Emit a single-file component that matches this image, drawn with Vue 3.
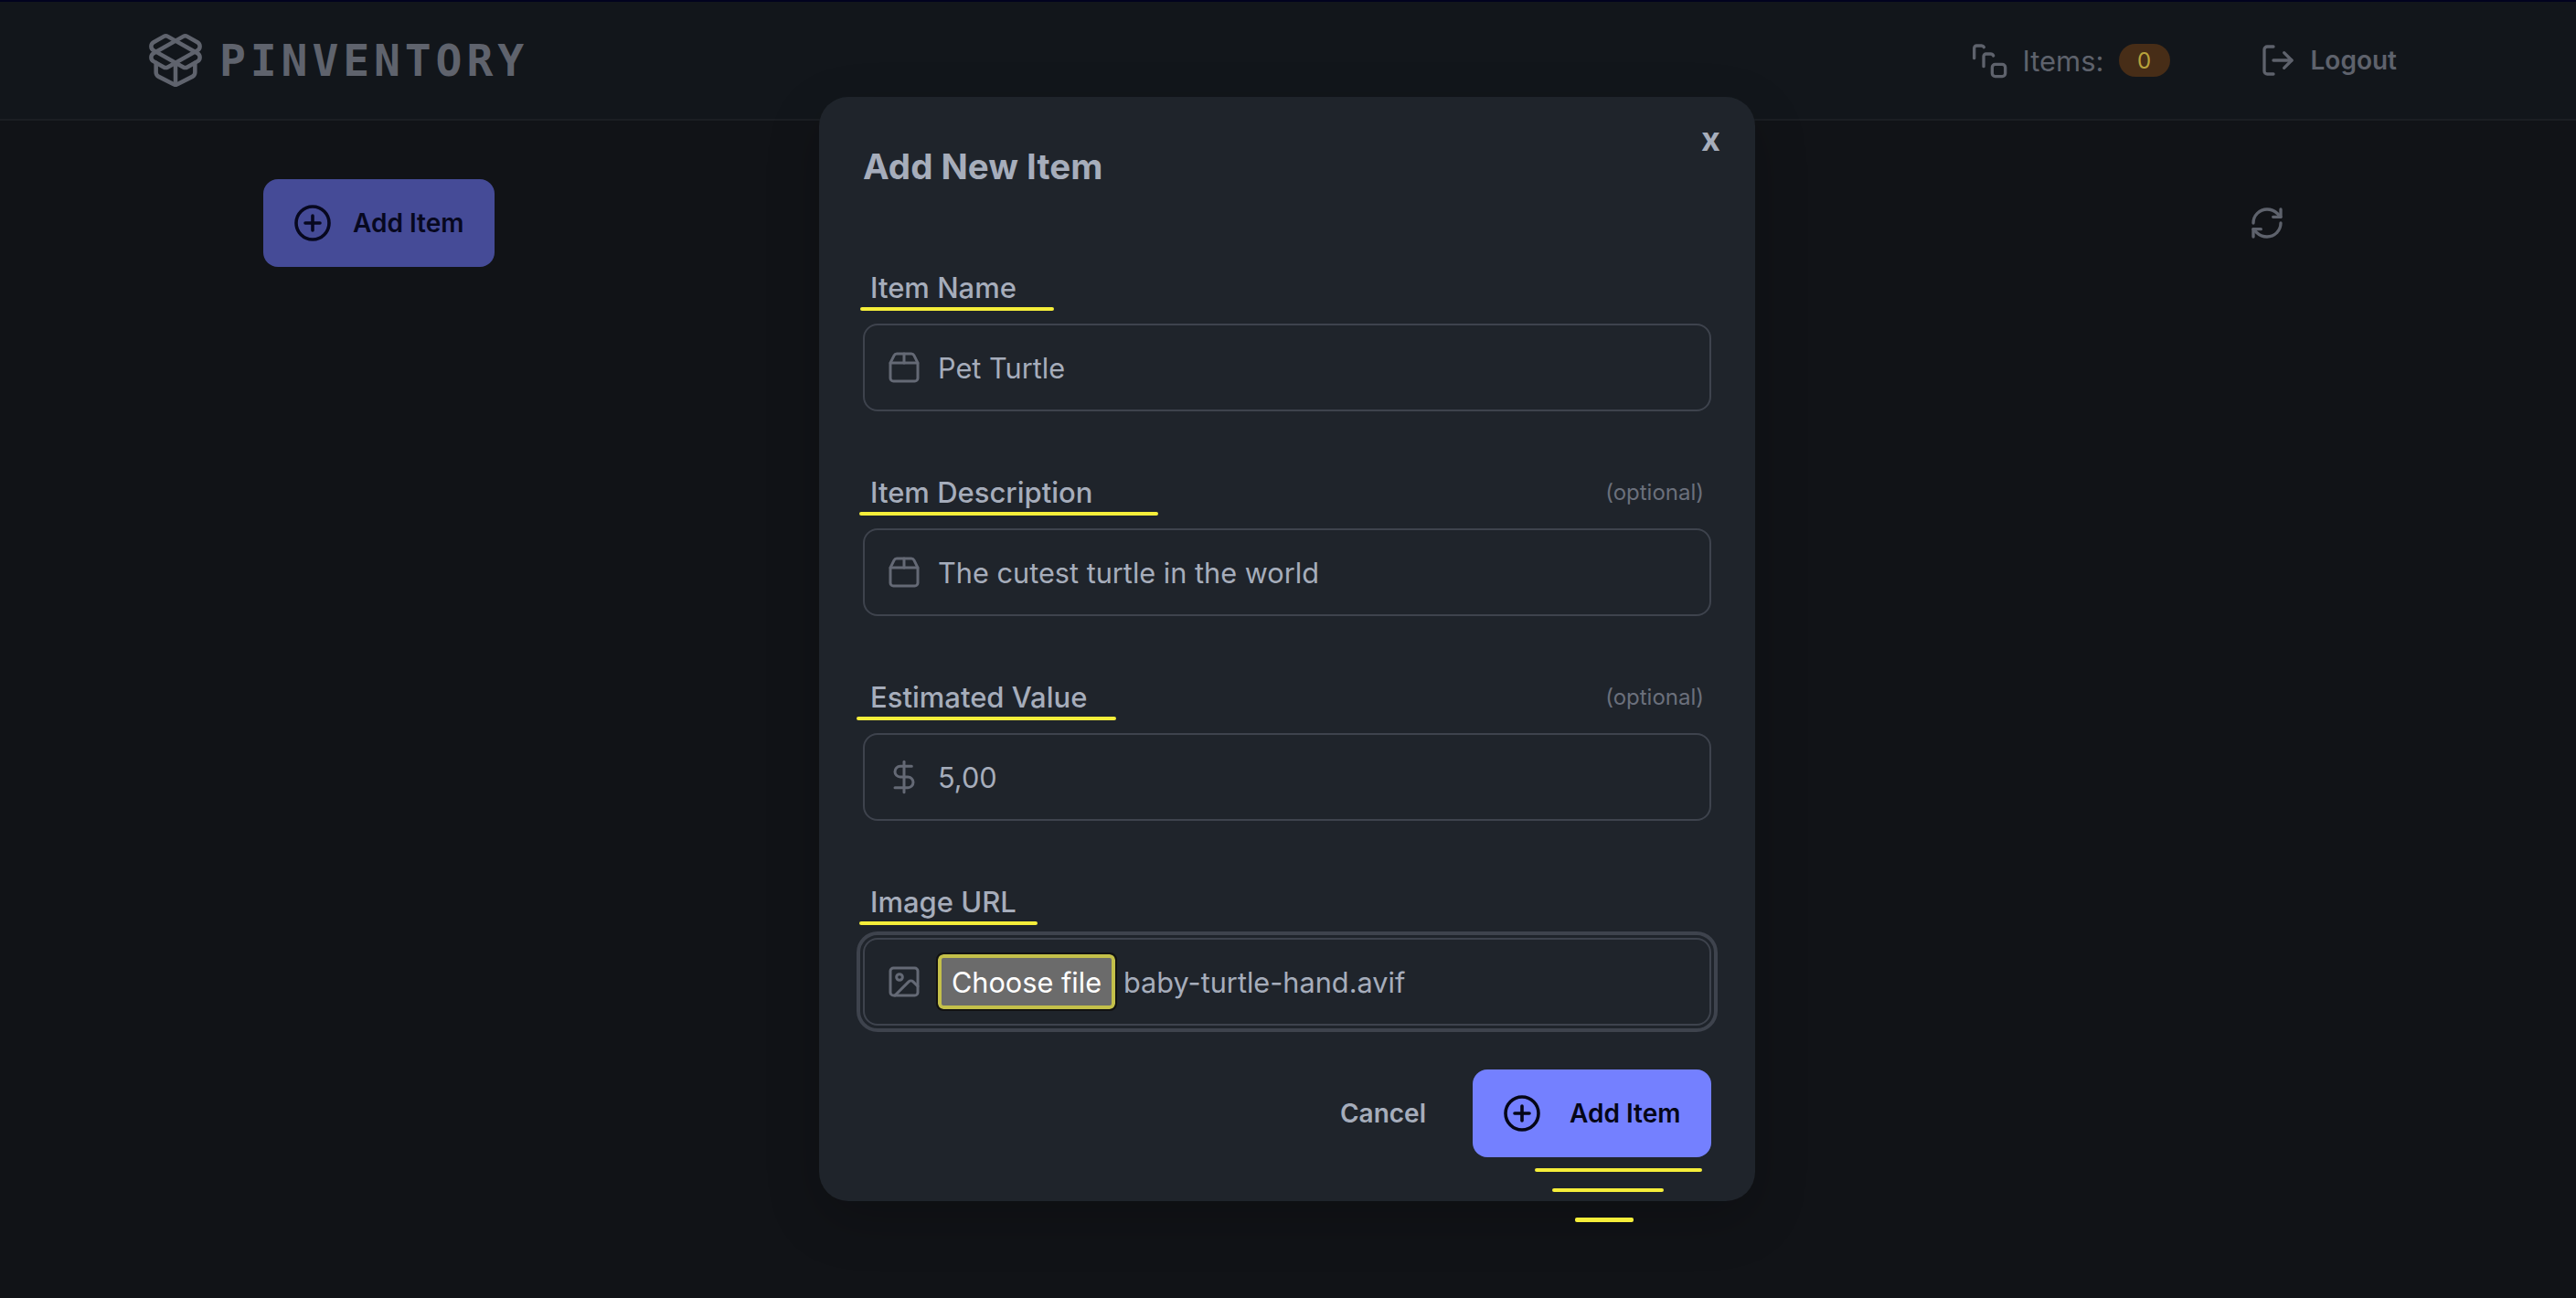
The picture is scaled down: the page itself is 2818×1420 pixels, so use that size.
<template>
  <div class="page">
    <header class="navbar">
      <div class="brand">
        <svg class="brand-icon" viewBox="0 0 24 24">
          <path d="M12 22v-9" />
          <path d="M15.17 2.21a1.67 1.67 0 0 1 1.63 0L21 4.57a1.93 1.93 0 0 1 0 3.36L8.82 14.79a1.655 1.655 0 0 1-1.64 0L3 12.43a1.93 1.93 0 0 1 0-3.36z" />
          <path d="M20 13v3.87a2.06 2.06 0 0 1-1.11 1.83l-6 3.08a1.93 1.93 0 0 1-1.78 0l-6-3.08A2.06 2.06 0 0 1 4 16.87V13" />
          <path d="M21 12.43a1.93 1.93 0 0 0 0-3.36L8.83 2.2a1.64 1.64 0 0 0-1.63 0L3 4.57a1.93 1.93 0 0 0 0 3.36l12.18 6.86a1.636 1.636 0 0 0 1.63 0z" />
        </svg>
        <span class="brand-name">PINVENTORY</span>
      </div>
      <div class="nav-right">
        <div class="nav-items">
          <svg class="icon" viewBox="0 0 24 24">
            <path d="M2.2 10.6V4a1.6 1.6 0 0 1 1.6-1.6H7a2 2 0 0 1 1.6 1" />
            <path d="M8.4 16V9.4A1.6 1.6 0 0 1 10 7.8H13a2 2 0 0 1 1.8 1.2" />
            <rect x="14" y="14.6" width="8.6" height="8" rx="2" />
          </svg>
          <span class="items-text">Items:</span>
          <span class="badge">0</span>
        </div>
        <div class="nav-logout">
          <svg class="icon" viewBox="0 0 24 24">
            <path d="M9 21H5a2 2 0 0 1-2-2V5a2 2 0 0 1 2-2h4" />
            <polyline points="16 17 21 12 16 7" />
            <line x1="21" y1="12" x2="9" y2="12" />
          </svg>
          <span>Logout</span>
        </div>
      </div>
    </header>

    <div class="toolbar">
      <button class="btn btn-dim">
        <svg class="icon-btn" viewBox="0 0 24 24">
          <circle cx="12" cy="12" r="9" />
          <path d="M12 8v8M8 12h8" />
        </svg>
        <span>Add Item</span>
      </button>
      <svg class="icon refresh" viewBox="0 0 24 24">
        <path d="M3 12a9 9 0 0 1 9-9 9.75 9.75 0 0 1 6.74 2.74L21 8" />
        <path d="M21 3v5h-5" />
        <path d="M21 12a9 9 0 0 1-9 9 9.75 9.75 0 0 1-6.74-2.74L3 16" />
        <path d="M8 16H3v5" />
      </svg>
    </div>

    <div class="overlay">
      <div class="modal">
        <span class="close">x</span>
        <h2 class="title">Add New Item</h2>

        <div v-for="field in fields" :key="field.label" class="field">
          <div class="label">
            <span>{{ field.label }}</span>
            <span v-if="field.optional" class="optional">(optional)</span>
          </div>
          <i class="mark" :style="{ left: field.markLeft + 'px', width: field.markWidth + 'px' }"></i>
          <div class="input" :class="{ focused: field.file }">
            <svg class="icon input-icon" viewBox="0 0 24 24">
              <template v-if="field.icon === 'box'">
                <path d="M12 3v6" />
                <path d="M16.76 3a2 2 0 0 1 1.8 1.1l2.23 4.479a2 2 0 0 1 .21.891V19a2 2 0 0 1-2 2H5a2 2 0 0 1-2-2V9.472a2 2 0 0 1 .211-.894L5.45 4.1A2 2 0 0 1 7.24 3z" />
                <path d="M3.054 9.013h17.893" />
              </template>
              <template v-else-if="field.icon === 'dollar'">
                <line x1="12" y1="2" x2="12" y2="22" />
                <path d="M17 5H9.5a3.5 3.5 0 0 0 0 7h5a3.5 3.5 0 0 1 0 7H6" />
              </template>
              <template v-else>
                <rect x="3" y="3" width="18" height="18" rx="2" />
                <circle cx="9" cy="9" r="2" />
                <path d="m21 15-3.086-3.086a2 2 0 0 0-2.828 0L6 21" />
              </template>
            </svg>
            <template v-if="field.file">
              <span class="file-btn">Choose file</span>
              <span class="file-name">{{ field.value }}</span>
            </template>
            <span v-else>{{ field.value }}</span>
          </div>
        </div>

        <div class="actions">
          <span class="cancel">Cancel</span>
          <button class="btn btn-primary">
            <svg class="icon-btn" viewBox="0 0 24 24">
              <circle cx="12" cy="12" r="9" />
              <path d="M12 8v8M8 12h8" />
            </svg>
            <span>Add Item</span>
          </button>
        </div>

        <i class="scribble scribble-1"></i>
        <i class="scribble scribble-2"></i>
        <i class="scribble scribble-3"></i>
      </div>
    </div>
  </div>
</template>

<script setup>
const fields = [
  { label: 'Item Name', value: 'Pet Turtle', icon: 'box', markLeft: -3, markWidth: 212 },
  { label: 'Item Description', value: 'The cutest turtle in the world', icon: 'box', optional: true, markLeft: -4, markWidth: 327 },
  { label: 'Estimated Value', value: '5,00', icon: 'dollar', optional: true, markLeft: -7, markWidth: 284 },
  { label: 'Image URL', value: 'baby-turtle-hand.avif', icon: 'image', file: true, markLeft: -4, markWidth: 195 }
]
</script>

<style>
html,
body {
  margin: 0;
  background: #111317;
  overflow: hidden;
}
</style>

<style scoped>
.page {
  position: relative;
  min-height: 100vh;
  background: #111317;
  border-top: 2px solid #01021f;
  box-sizing: border-box;
  font-family: Inter, "Liberation Sans", sans-serif;
  color: #a6adbb;
}

svg {
  fill: none;
  stroke: currentColor;
  stroke-linecap: round;
  stroke-linejoin: round;
  flex-shrink: 0;
}

.navbar {
  display: flex;
  align-items: center;
  justify-content: space-between;
  height: 128px;
  padding: 0 196px 0 160px;
  background: #12161b;
  border-bottom: 2px solid #1b1e23;
  color: #5e626c;
}

.brand {
  display: flex;
  align-items: center;
  gap: 16px;
}

.brand-icon {
  width: 64px;
  height: 64px;
  stroke-width: 1.7;
  color: #5f636d;
}

.brand-name {
  font-family: "DejaVu Sans Mono", monospace;
  font-size: 48px;
  font-weight: 700;
  letter-spacing: 4.9px;
  color: #5f636d;
}

.nav-right {
  display: flex;
  align-items: center;
  gap: 98px;
}

.nav-items,
.nav-logout {
  display: flex;
  align-items: center;
  gap: 16px;
}

.icon {
  width: 40px;
  height: 40px;
  stroke-width: 2;
}

.items-text {
  font-size: 31px;
}

.badge {
  display: flex;
  align-items: center;
  justify-content: center;
  width: 56px;
  height: 36px;
  border-radius: 18px;
  background: #472d17;
  color: #b8a33c;
  font-size: 24px;
}

.nav-logout {
  font-size: 28px;
  font-weight: 600;
}

.toolbar {
  display: flex;
  align-items: center;
  justify-content: space-between;
  padding: 64px 318px 0 288px;
}

.refresh {
  color: #5e626c;
}

.btn {
  display: flex;
  align-items: center;
  height: 96px;
  border: none;
  border-radius: 16px;
  font-family: inherit;
  font-size: 28px;
  font-weight: 600;
}

.btn-dim {
  width: 253px;
  padding: 0 0 0 30px;
  gap: 20px;
  background: #454b97;
  color: #07081f;
}

.btn-primary {
  width: 261px;
  padding: 0 0 0 30px;
  gap: 28px;
  background: #7480ff;
  color: #050617;
}

.icon-btn {
  width: 48px;
  height: 48px;
  stroke-width: 1.8;
}

.overlay {
  position: absolute;
  inset: 0 2px 0 0;
  display: flex;
  justify-content: center;
  align-items: flex-start;
}

.modal {
  position: relative;
  width: 1024px;
  height: 1208px;
  margin-top: 104px;
  padding: 48px;
  box-sizing: border-box;
  background: #1f242b;
  border-radius: 32px;
  box-shadow: 0 20px 60px rgba(0, 0, 0, 0.2);
}

.close {
  position: absolute;
  top: 18px;
  right: 38px;
  font-size: 36px;
  font-weight: 700;
  line-height: 56px;
  color: #a6adbb;
}

.title {
  margin: 0 0 66px;
  font-size: 38.5px;
  font-weight: 700;
  line-height: 56px;
  color: #a6adbb;
}

.field {
  position: relative;
  margin-bottom: 50px;
}

.label {
  display: flex;
  align-items: center;
  justify-content: space-between;
  box-sizing: border-box;
  height: 78px;
  padding: 0 8px 2px;
  font-size: 31px;
  font-weight: 500;
}

.optional {
  font-size: 24px;
  font-weight: 400;
  color: #6b707c;
}

.mark {
  position: absolute;
  top: 60px;
  height: 4px;
  border-radius: 2px;
  background: #f5ee3a;
}

.input {
  display: flex;
  align-items: center;
  height: 96px;
  padding: 0 23px;
  box-sizing: border-box;
  border: 2px solid #3e434d;
  border-radius: 16px;
  font-size: 30.7px;
  color: #a6adbb;
}

.input.focused {
  outline: 4px solid #3e434d;
  outline-offset: 3px;
}

.input-icon {
  margin-right: 17px;
  color: #646975;
  stroke-width: 1.8;
}

.file-btn {
  display: flex;
  align-items: center;
  justify-content: center;
  box-sizing: border-box;
  width: 194px;
  height: 60px;
  margin-right: 9px;
  border: 4px solid #c4c04a;
  border-radius: 6px;
  outline: 2px solid #121212;
  background: #6b6b6b;
  color: #fff;
  font-size: 30.7px;
}

.actions {
  display: flex;
  align-items: center;
  justify-content: flex-end;
  gap: 51px;
  margin-top: -2px;
}

.cancel {
  font-size: 28px;
  font-weight: 600;
}

.scribble {
  position: absolute;
  height: 4px;
  border-radius: 2px;
  background: #f5ee3a;
}

.scribble-1 {
  left: 783px;
  top: 1172px;
  width: 183px;
}

.scribble-2 {
  left: 802px;
  top: 1194px;
  width: 122px;
}

.scribble-3 {
  left: 827px;
  top: 1226px;
  width: 64px;
  height: 5px;
}
</style>
